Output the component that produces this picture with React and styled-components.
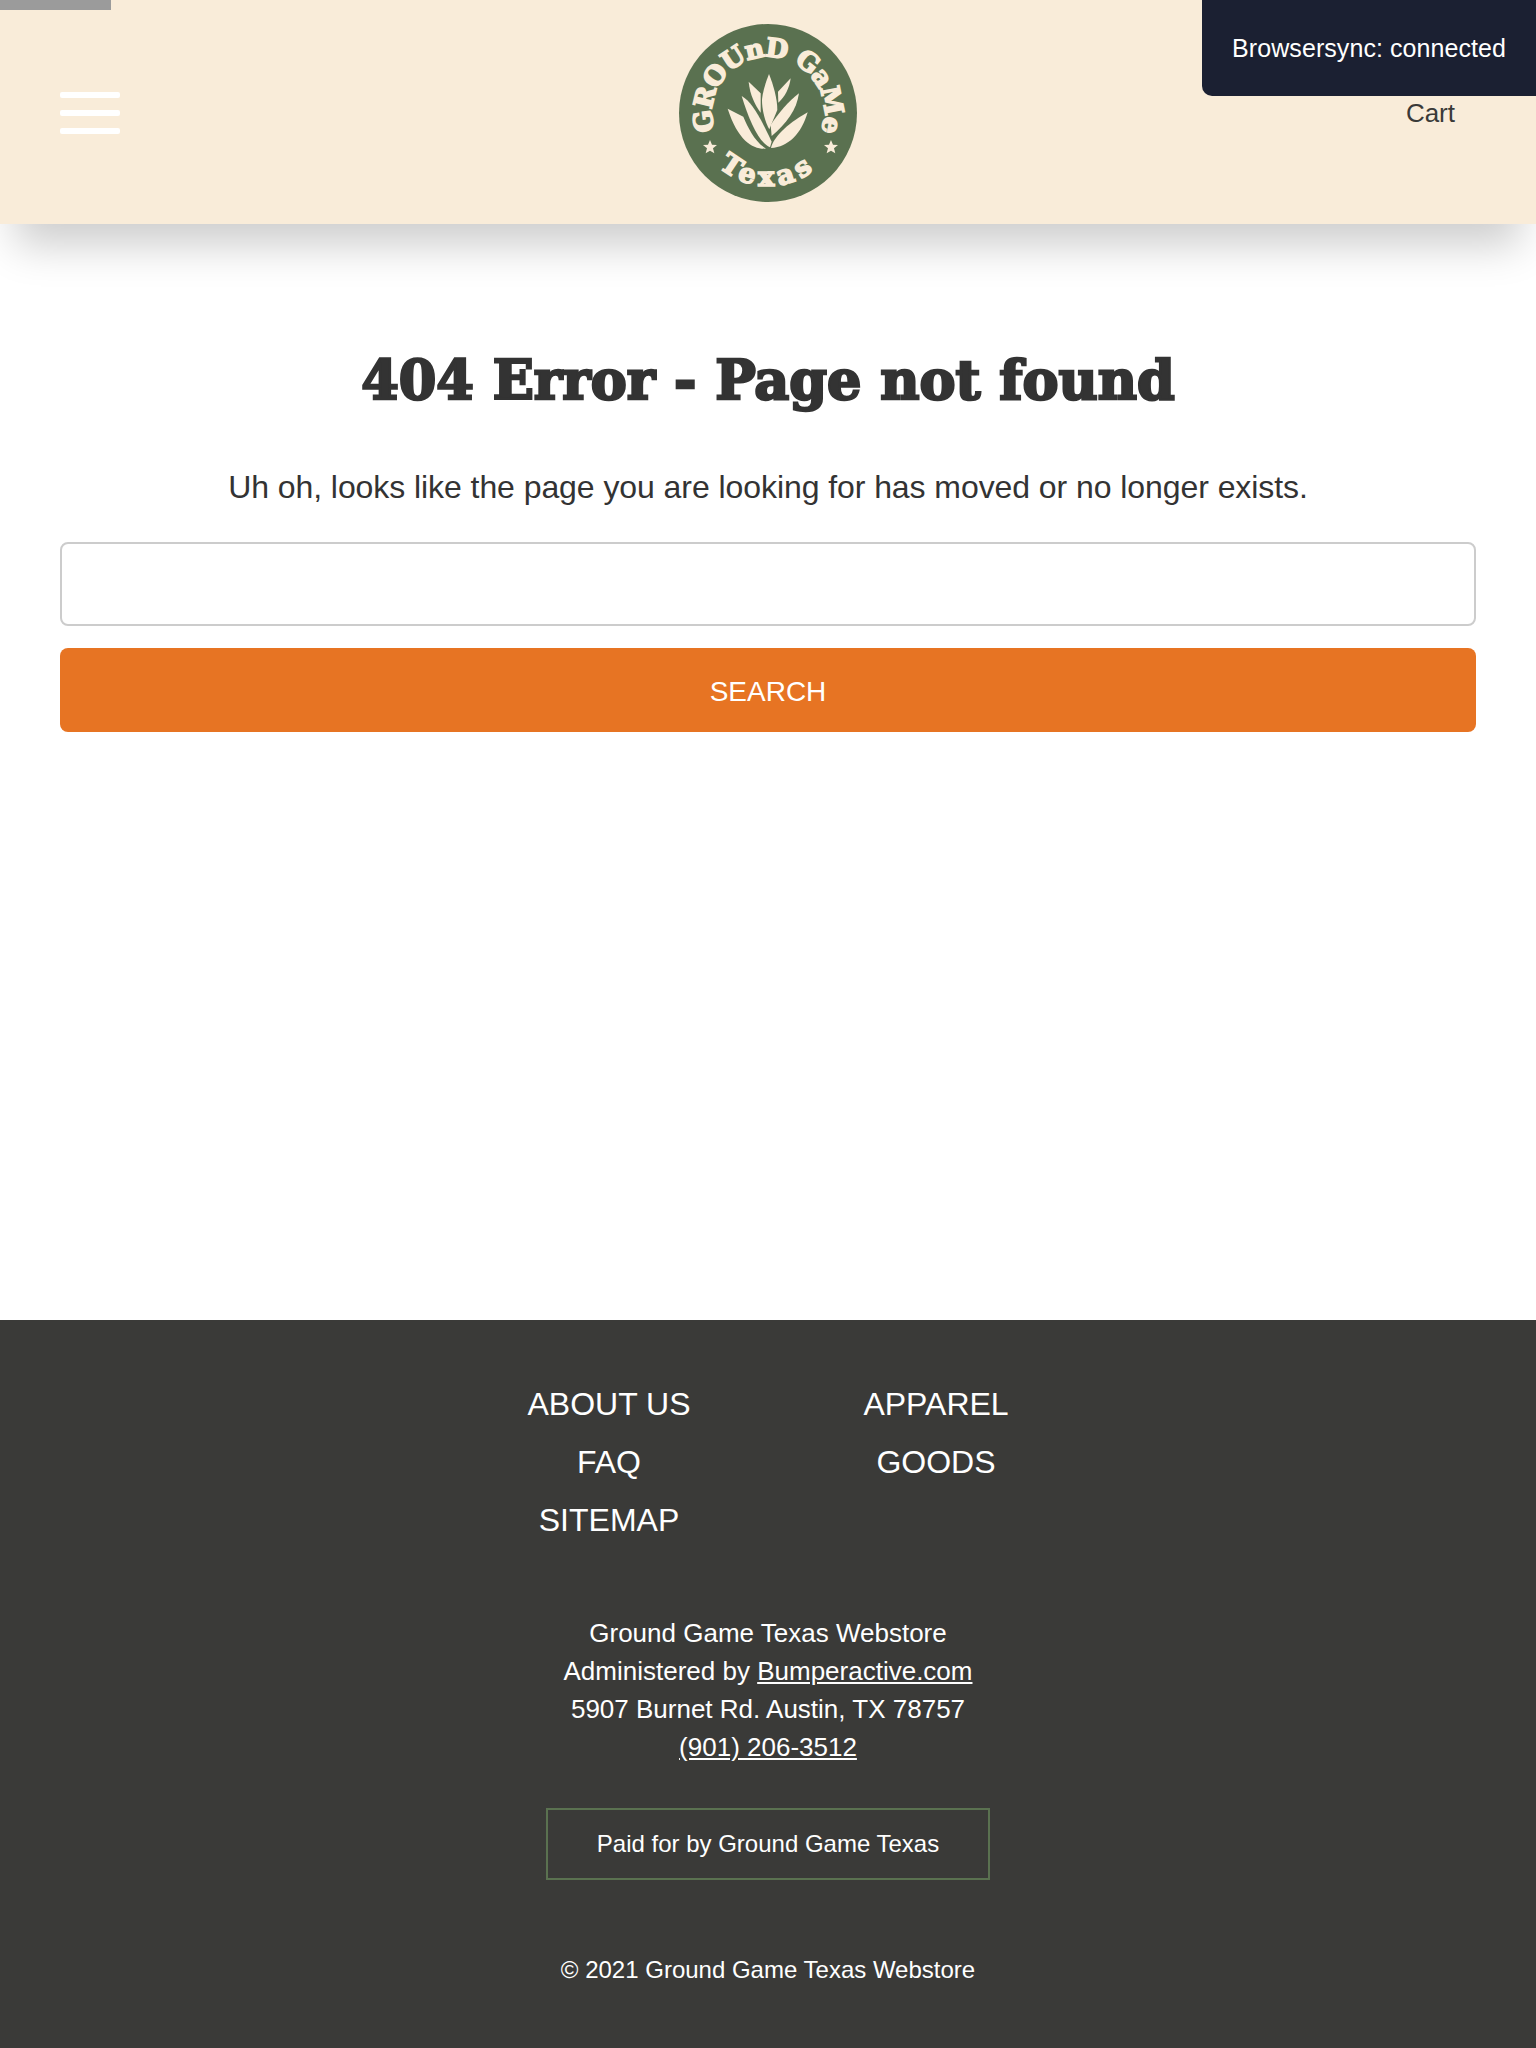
import React from "react";
import styled, { createGlobalStyle } from "styled-components";

const GlobalStyle = createGlobalStyle`
  html, body {
    margin: 0;
    padding: 0;
    background: #fff;
  }
  * {
    box-sizing: border-box;
  }
  body {
    font-family: Helvetica, "Liberation Sans", Arial, sans-serif;
    color: #333;
  }
`;

const Page = styled.div`
  position: relative;
  min-height: 2048px;
  display: flex;
  flex-direction: column;
`;

const LoadBar = styled.div`
  position: absolute;
  top: 0;
  left: 0;
  width: 111px;
  height: 10px;
  background: #9b9b9b;
  z-index: 5;
`;

const Notify = styled.div`
  position: absolute;
  top: 0;
  right: 0;
  height: 96px;
  padding: 33px 30px 0;
  background: #1b2032;
  color: #fff;
  font-size: 25px;
  line-height: 30px;
  letter-spacing: 0.07px;
  border-bottom-left-radius: 10px;
  z-index: 6;
`;

const Header = styled.header`
  height: 224px;
  padding: 2px 60px 0;
  background: #f9ecd9;
  box-shadow: 0 36px 40px -15px rgba(0, 0, 0, 0.2);
  display: grid;
  grid-template-columns: 1fr auto 1fr;
  align-items: center;
`;

const Burger = styled.div`
  display: flex;
  flex-direction: column;
  gap: 12px;
  width: 60px;

  span {
    height: 6px;
    background: #fff;
    border-radius: 2px;
  }
`;

const Cart = styled.a`
  justify-self: end;
  margin-right: 21px;
  font-size: 26px;
  color: #3a3a38;
`;

const Main = styled.main`
  flex: 1;
  padding: 126px 60px 0;
  text-align: center;
`;

const Title = styled.h1`
  margin: 0;
  font-family: "DejaVu Serif", serif;
  font-weight: 700;
  font-size: 54px;
  line-height: 60px;
  color: #333;
  -webkit-text-stroke: 2.5px #333;
`;

const Lead = styled.p`
  margin: 55px 0 0;
  font-size: 32px;
  line-height: 44px;
  letter-spacing: -0.07px;
  color: #333;
`;

const SearchInput = styled.input`
  display: block;
  width: 100%;
  height: 84px;
  margin-top: 33px;
  border: 2px solid #ccc;
  border-radius: 8px;
  background: #fff;
`;

const SearchButton = styled.button`
  display: block;
  width: 100%;
  height: 84px;
  margin-top: 22px;
  padding-top: 4px;
  border: 0;
  border-radius: 8px;
  background: #e77423;
  color: #fff;
  font-family: inherit;
  font-size: 28px;
`;

const Footer = styled.footer`
  height: 728px;
  padding-top: 55px;
  background: #3a3a38;
  color: #fff;
  text-align: center;
`;

const FooterNav = styled.div`
  display: flex;
  justify-content: center;
`;

const NavColumn = styled.ul`
  list-style: none;
  width: ${(props) => props.$width}px;
  margin: 0;
  padding: 0;
  font-size: 32px;
  line-height: 58px;
`;

const Address = styled.address`
  margin-top: 65px;
  font-style: normal;
  font-size: 26px;
  line-height: 38px;

  a {
    color: inherit;
  }
`;

const PaidBox = styled.div`
  width: 444px;
  height: 72px;
  margin: 42px auto 0;
  border: 2px solid #5a7150;
  font-size: 24px;
  line-height: 68px;
`;

const Copyright = styled.p`
  margin: 75px 0 0;
  font-size: 24px;
  line-height: 30px;
`;

// leaf and star paths are in the coordinates of a 3x crop of the badge
const Logo = () => (
  <svg width="178" height="178" viewBox="0 0 178 178">
    <circle cx="89" cy="89" r="89" fill="#5a7150" />
    <defs>
      <path id="arcTop" d="M 79 144 A 56 56 0 1 1 99 144" />
      <path id="arcBottom" d="M 22 118 A 73 73 0 0 0 156 118" />
    </defs>
    <text
      fill="#f9ecd9"
      stroke="#f9ecd9"
      strokeWidth="1.6"
      fontFamily="'DejaVu Serif', serif"
      fontWeight="700"
      fontSize="26"
      letterSpacing="-1.1"
    >
      <textPath href="#arcTop" startOffset="50%" textAnchor="middle">
        GROUnD GaMe
      </textPath>
    </text>
    <text
      fill="#f9ecd9"
      stroke="#f9ecd9"
      strokeWidth="1.6"
      fontFamily="'DejaVu Serif', serif"
      fontWeight="700"
      fontSize="27"
      letterSpacing="5"
    >
      <textPath href="#arcBottom" startOffset="50%" textAnchor="middle">
        Texas
      </textPath>
    </text>
    <g fill="#f9ecd9" transform="scale(0.3333) translate(-57 -42)">
      <path d="M150 390l6 14 15 1-12 10 4 15-13-8-13 8 4-15-12-10 15-1z" />
      <path d="M513 390l6 14 15 1-12 10 4 15-13-8-13 8 4-15-12-10 15-1z" />
      <path d="M327 192C340 225 352 265 352 300L328 358C315 335 306 300 306 270C308 245 318 215 327 192Z" />
      <path d="M266 215L302 250L302 308C285 285 270 255 266 215Z" />
      <path d="M392 205C388 235 375 260 355 278L354 245Z" />
      <path d="M245 258C275 275 300 320 335 395L330 412C300 400 270 340 245 258Z" />
      <path d="M417 250C410 300 380 340 335 378L332 345C355 310 385 275 417 250Z" />
      <path d="M203 296L250 320C265 355 285 395 318 416C280 418 235 395 203 296Z" />
      <path d="M443 307C425 370 385 412 333 414C340 385 375 345 443 307Z" />
    </g>
  </svg>
);

export default function App() {
  return (
    <Page>
      <GlobalStyle />
      <LoadBar />
      <Notify>Browsersync: connected</Notify>
      <Header>
        <Burger>
          <span />
          <span />
          <span />
        </Burger>
        <Logo />
        <Cart>Cart</Cart>
      </Header>
      <Main>
        <Title>404 Error - Page not found</Title>
        <Lead>Uh oh, looks like the page you are looking for has moved or no longer exists.</Lead>
        <SearchInput type="text" />
        <SearchButton>SEARCH</SearchButton>
      </Main>
      <Footer>
        <FooterNav>
          <NavColumn $width={336}>
            <li>ABOUT US</li>
            <li>FAQ</li>
            <li>SITEMAP</li>
          </NavColumn>
          <NavColumn $width={318}>
            <li>APPAREL</li>
            <li>GOODS</li>
          </NavColumn>
        </FooterNav>
        <Address>
          Ground Game Texas Webstore
          <br />
          Administered by <a href="#bumper">Bumperactive.com</a>
          <br />
          5907 Burnet Rd. Austin, TX 78757
          <br />
          <a href="#phone">(901) 206-3512</a>
        </Address>
        <PaidBox>Paid for by Ground Game Texas</PaidBox>
        <Copyright>© 2021 Ground Game Texas Webstore</Copyright>
      </Footer>
    </Page>
  );
}
